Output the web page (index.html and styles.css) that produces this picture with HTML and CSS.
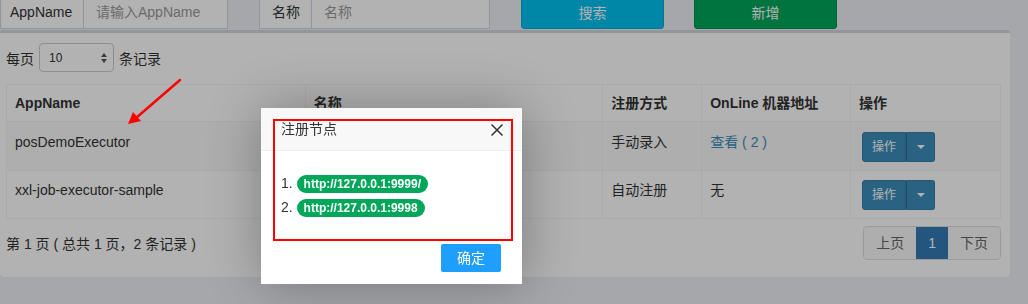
FILE: index.html
```html
<!DOCTYPE html>
<html lang="zh-CN">
<head>
<meta charset="UTF-8" />
<meta name="viewport" content="width=device-width, initial-scale=1" />
<title>执行器管理</title>
<link rel="stylesheet" href="styles.css">
</head>
<body>

<div class="search-bar">
  <div class="input-group group-app">
    <span class="addon">AppName</span>
    <input type="text" placeholder="请输入AppName" />
  </div>
  <div class="input-group group-title">
    <span class="addon">名称</span>
    <input type="text" placeholder="名称" />
  </div>
  <button class="btn btn-info">搜索</button>
  <button class="btn btn-success">新增</button>
</div>

<div class="box">
  <div class="length">
    <span>每页</span>
    <span class="select">
      10
      <svg class="arrows" width="6" height="10" viewBox="0 0 6 10">
        <path d="M3 0 L6 4 L0 4 Z M0 6 L6 6 L3 10 Z" fill="#555" />
      </svg>
    </span>
    <span>条记录</span>
  </div>

  <table class="list">
    <thead>
      <tr>
        <th class="col-app">AppName</th>
        <th class="col-title">名称</th>
        <th class="col-type">注册方式</th>
        <th class="col-online">OnLine 机器地址</th>
        <th class="col-op">操作</th>
      </tr>
    </thead>
    <tbody>
      <tr class="odd">
        <td>posDemoExecutor</td>
        <td></td>
        <td>手动录入</td>
        <td><a href="#" class="link">查看 ( 2 )</a></td>
        <td>
          <div class="btn-group">
            <span class="btn-op">操作</span><span class="btn-caret"><i></i></span>
          </div>
        </td>
      </tr>
      <tr class="even">
        <td>xxl-job-executor-sample</td>
        <td></td>
        <td>自动注册</td>
        <td>无</td>
        <td>
          <div class="btn-group">
            <span class="btn-op">操作</span><span class="btn-caret"><i></i></span>
          </div>
        </td>
      </tr>
    </tbody>
  </table>

  <div class="footer">
    <div class="info">第 1 页 ( 总共 1 页，2 条记录 )</div>
    <ul class="pagination">
      <li>上页</li>
      <li class="active">1</li>
      <li>下页</li>
    </ul>
  </div>
</div>

<div class="shade"></div>

<div class="layer">
  <div class="layer-title">
    注册节点
    <svg class="layer-close" width="12" height="12" viewBox="0 0 12 12">
      <path d="M0.5 0.5 L11.5 11.5 M11.5 0.5 L0.5 11.5" stroke="#333" stroke-width="1.5" fill="none" />
    </svg>
  </div>
  <div class="layer-content">
    <div>1. <span class="badge">http://127.0.0.1:9999/</span></div>
    <div>2. <span class="badge">http://127.0.0.1:9998</span></div>
  </div>
  <div class="layer-btns">
    <span class="layer-ok">确定</span>
  </div>
</div>

<!-- annotations drawn on top of the screenshot -->
<div class="mark-box"></div>
<svg class="mark-arrow" width="200" height="140" viewBox="0 0 200 140">
  <line x1="180" y1="80" x2="136" y2="118" stroke="#f00" stroke-width="2.5" stroke-linecap="round" />
  <path d="M128 124 L133 112 L141 121 Z" fill="#f00" />
</svg>

</body>
</html>
```

FILE: styles.css
```css
* {
  box-sizing: border-box;
}
body {
  margin: 0;
  background: #ecf0f5;
  font-family: "Liberation Sans", "Noto Sans CJK SC", sans-serif;
  font-size: 14px;
  color: #333;
  overflow: hidden;
}

/* top search row */
.search-bar {
  display: flex;
  height: 34px;
  margin-top: -5px;
}
.input-group {
  display: flex;
  height: 34px;
}
.group-app {
  width: 228px;
  margin-right: 31px;
}
.group-app .addon {
  width: 84px;
  padding: 6px 0 6px 9px;
}
.group-title {
  width: 231px;
  margin-right: 31px;
}
.group-title .addon {
  width: 53px;
}
.addon {
  padding: 6px 12px;
  line-height: 20px;
  background: #fff;
  border: 1px solid #d2d6de;
  white-space: nowrap;
}
.input-group input {
  flex: 1;
  min-width: 0;
  height: 34px;
  padding: 6px 12px;
  font: inherit;
  border: 1px solid #d2d6de;
  border-left: none;
  background: #fff;
  outline: none;
}
.input-group input::placeholder {
  color: #999;
}
.btn {
  width: 143px;
  height: 34px;
  border: 1px solid transparent;
  border-radius: 3px;
  color: #fff;
  font: inherit;
  padding: 0;
}
.btn-info {
  background: #00c0ef;
  border-color: #00acd6;
  margin-right: 30px;
}
.btn-success {
  background: #00a65a;
  border-color: #008d4c;
}

/* box */
.box {
  width: 1010px;
  margin-top: 1px;
  background: #fff;
  border-top: 3px solid #d2d6de;
  border-radius: 3px;
  box-shadow: 0 1px 1px rgba(0, 0, 0, 0.1);
  padding: 10px 9px 17px 6px;
}
.length {
  display: flex;
  align-items: center;
  height: 29px;
  gap: 5px;
}
.select {
  display: flex;
  align-items: center;
  justify-content: space-between;
  width: 75px;
  height: 29px;
  padding: 0 6px 0 9px;
  border: 1px solid #ccc;
  border-radius: 4px;
  font-size: 12px;
}

.list {
  width: 995px;
  margin-top: 12px;
  border-collapse: collapse;
  border: 1px solid #f4f4f4;
}
.list th,
.list td {
  border: 1px solid #f4f4f4;
  padding: 9px 8px 8px;
  line-height: 20px;
  text-align: left;
  vertical-align: top;
}
.list th {
  height: 37px;
  padding: 8px;
  vertical-align: middle;
}
.list tr.odd {
  height: 49px;
}
.list tr.even {
  height: 47px;
}
.list tr.odd td {
  background: #f9f9f9;
  padding-top: 10px;
}
.col-app { width: 299px; }
.col-title { width: 298px; }
.col-type { width: 99px; }
.col-online { width: 149px; }
.col-op { width: 150px; }
.link {
  color: #3c8dbc;
  text-decoration: none;
}
.btn-group {
  display: inline-flex;
  height: 30px;
  margin-left: 3px;
  vertical-align: top;
  font-size: 12px;
  color: #fff;
}
.btn-op {
  padding: 0 9px;
  line-height: 28px;
  background: #3c8dbc;
  border: 1px solid #367fa9;
  border-radius: 3px 0 0 3px;
}
.btn-caret {
  width: 29px;
  display: flex;
  align-items: center;
  justify-content: center;
  background: #3c8dbc;
  border: 1px solid #367fa9;
  border-left-color: #2e6c90;
  border-radius: 0 3px 3px 0;
}
.btn-caret i {
  border-top: 4px solid #fff;
  border-left: 4px solid transparent;
  border-right: 4px solid transparent;
}

.footer {
  display: flex;
  justify-content: space-between;
  align-items: center;
  width: 995px;
  margin-top: 7px;
}
.pagination {
  display: flex;
  margin: 0;
  padding: 0;
  list-style: none;
  border: 1px solid #ddd;
  border-radius: 4px;
  overflow: hidden;
}
.pagination li {
  padding: 6px 12px;
  line-height: 20px;
  background: #fafafa;
  color: #666;
}
.pagination li.active {
  background: #337ab7;
  color: #fff;
}

/* dialog */
.shade {
  position: fixed;
  inset: 0;
  background: rgba(0, 0, 0, 0.3);
  z-index: 10;
}
.layer {
  position: absolute;
  left: 261px;
  top: 108px;
  width: 261px;
  background: #fff;
  box-shadow: 1px 1px 50px rgba(0, 0, 0, 0.3);
  z-index: 20;
}
.layer-title {
  position: relative;
  height: 43px;
  padding-left: 20px;
  line-height: 42px;
  background: #f8f8f8;
  border-bottom: 1px solid #eee;
  color: #333;
}
.layer-close {
  position: absolute;
  right: 19px;
  top: 16px;
}
.layer-content {
  padding: 20px;
  line-height: 24px;
}
.badge {
  display: inline-block;
  padding: 0 7px;
  line-height: 18px;
  border-radius: 9px;
  background: #00a65a;
  color: #fff;
  font-size: 12px;
  font-weight: bold;
}
.layer-btns {
  display: flex;
  justify-content: flex-end;
  padding: 0 16px 12px;
}
.layer-ok {
  margin: 5px 5px 0;
  width: 60px;
  height: 28px;
  line-height: 28px;
  text-align: center;
  background: #1e9fff;
  border-radius: 2px;
  color: #fff;
}

.mark-box {
  position: absolute;
  left: 273px;
  top: 119px;
  width: 240px;
  height: 122px;
  border: 2px solid #f00;
  z-index: 30;
}
.mark-arrow {
  position: absolute;
  left: 0;
  top: 0;
  z-index: 30;
}
```
